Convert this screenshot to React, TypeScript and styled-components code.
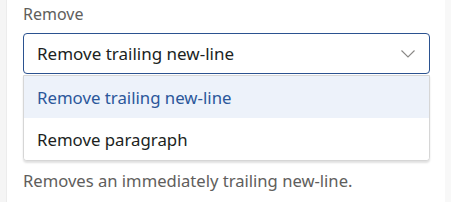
import React, { useState } from 'react';
import styled, { createGlobalStyle } from 'styled-components';

const GlobalStyle = createGlobalStyle`
  html, body {
    margin: 0;
    padding: 0;
    background: #ffffff;
    font-family: 'Noto Sans', 'Open Sans', sans-serif;
  }
`

const Page = styled.div`
  display: flex;
  height: 202px;
`
const LeftRail = styled.div`
  width: 7px;
  background: #f5f5f5;
  border-right: 1px solid #ececec;
  box-sizing: border-box;
`
const RightRail = styled.div`
  width: 6px;
  background: #f8f8f8;
`
const Panel = styled.div`
  flex: 1;
  padding: 4px 15px 0 16px;
  display: flex;
  flex-direction: column;
`
const Label = styled.label`
  font-size: 16px;
  line-height: 20px;
  color: #605e5c;
  margin-bottom: 9px;
`
const Field = styled.div`
  position: relative;
  display: flex;
  flex-direction: column;
`
const SelectBox = styled.div`
  height: 41px;
  box-sizing: border-box;
  border: 1px solid #2b5290;
  border-radius: 4px;
  display: flex;
  align-items: center;
  justify-content: space-between;
  padding: 0 13px 0 13px;
  font-size: 17px;
  color: #201f1e;
`
const Menu = styled.ul`
  list-style: none;
  margin: 1px 0 0 0;
  padding: 0;
  border: 1px solid #d6d6d6;
  border-radius: 0 0 4px 4px;
  box-shadow: 0 2px 2px rgba(0, 0, 0, 0.12);
  background: #fff;
  overflow: hidden;
`
const Option = styled.li<{ $active?: boolean }>`
  height: 42px;
  display: flex;
  align-items: center;
  padding-left: 13px;
  font-size: 16.8px;
  background: ${p => (p.$active ? '#edf2fa' : '#ffffff')};
  color: ${p => (p.$active ? '#2b579a' : '#201f1e')};
`
const Hint = styled.p`
  margin: 10px 0 0 0;
  font-size: 16.6px;
  line-height: 20px;
  color: #605e5c;
`

const options = ['Remove trailing new-line', 'Remove paragraph']

function Chevron() {
  return (
    <svg width="16" height="10" viewBox="0 0 16 10" fill="none">
      <path d="M1.5 1.5 L8 8 L14.5 1.5" stroke="#8a8886" strokeWidth="1.1" />
    </svg>
  )
}

export default function App() {
  const [value] = useState(0)
  return (
    <>
      <GlobalStyle />
      <Page>
        <LeftRail />
        <Panel>
          <Label>Remove</Label>
          <Field>
            <SelectBox>
              <span>{options[value]}</span>
              <Chevron />
            </SelectBox>
            <Menu>
              {options.map((o, i) => (
                <Option key={o} $active={i === value}>{o}</Option>
              ))}
            </Menu>
          </Field>
          <Hint>Removes an immediately trailing new-line.</Hint>
        </Panel>
        <RightRail />
      </Page>
    </>
  )
}
